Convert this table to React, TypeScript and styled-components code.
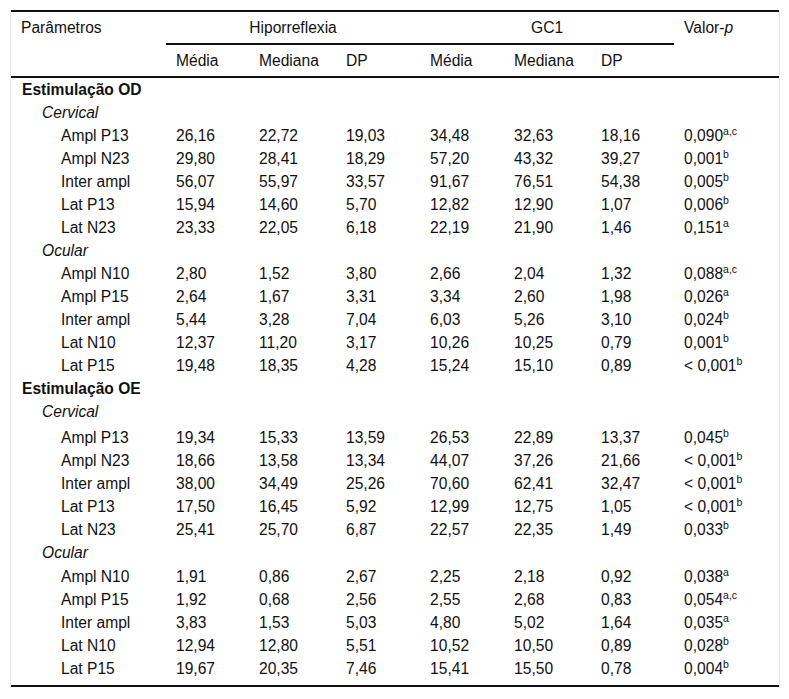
import React from "react";
import styled, { createGlobalStyle } from "styled-components";

const GlobalStyle = createGlobalStyle`
  body {
    margin: 0;
    background: #ffffff;
    font-family: "Liberation Sans", Arial, sans-serif;
    color: #111;
  }
`;

const Frame = styled.div`
  margin: 10px 10px 0 10px;
  width: 768px;
  border-left: 1px solid #e6e6e6;
  border-right: 1px solid #e6e6e6;
`;

const Table = styled.table`
  width: 768px;
  border-collapse: collapse;
  table-layout: fixed;
  font-size: 15.6px;
  line-height: 17px;
  border-top: 2px solid #111;
  border-bottom: 2px solid #111;
`;

const Th = styled.th<{ $center?: boolean; $rule?: boolean }>`
  font-weight: normal;
  text-align: ${(p) => (p.$center ? "center" : "left")};
  vertical-align: top;
  padding: 7px 0 7px ${(p) => (p.$center ? "0" : "10px")};
  border-bottom: ${(p) => (p.$rule ? "2px solid #111" : "none")};
`;

const HeadRow = styled.tr`
  height: 32px;
`;

const SubHeadRow = styled.tr`
  height: 32px;
  border-bottom: 2px solid #111;
`;

const Row = styled.tr<{ $extra?: number }>`
  height: ${(p) => 23 + (p.$extra ?? 0)}px;

  & > td {
    padding-bottom: ${(p) => 3 + (p.$extra ?? 0)}px;
  }
`;

const Cell = styled.td`
  padding: 3px 0 3px 10px;
  white-space: nowrap;
  vertical-align: top;
`;

const LabelCell = styled.td<{ $level: number }>`
  padding: 3px 0 3px ${(p) => (p.$level === 0 ? 11 : p.$level === 1 ? 31 : 50)}px;
  font-weight: ${(p) => (p.$level === 0 ? "bold" : "normal")};
  font-style: ${(p) => (p.$level === 1 ? "italic" : "normal")};
  white-space: nowrap;
  vertical-align: top;
`;

const Sup = styled.sup`
  font-size: 10.5px;
  line-height: 0;
`;

type DataRow = [string, string, string, string, string, string, string, string, string];

type Section = {
  title: string;
  groups: { name: string; extra?: number; rows: DataRow[] }[];
};

const sections: Section[] = [
  {
    title: "Estimulação OD",
    groups: [
      {
        name: "Cervical",
        rows: [
          ["Ampl P13", "26,16", "22,72", "19,03", "34,48", "32,63", "18,16", "0,090", "a,c"],
          ["Ampl N23", "29,80", "28,41", "18,29", "57,20", "43,32", "39,27", "0,001", "b"],
          ["Inter ampl", "56,07", "55,97", "33,57", "91,67", "76,51", "54,38", "0,005", "b"],
          ["Lat P13", "15,94", "14,60", "5,70", "12,82", "12,90", "1,07", "0,006", "b"],
          ["Lat N23", "23,33", "22,05", "6,18", "22,19", "21,90", "1,46", "0,151", "a"],
        ],
      },
      {
        name: "Ocular",
        rows: [
          ["Ampl N10", "2,80", "1,52", "3,80", "2,66", "2,04", "1,32", "0,088", "a,c"],
          ["Ampl P15", "2,64", "1,67", "3,31", "3,34", "2,60", "1,98", "0,026", "a"],
          ["Inter ampl", "5,44", "3,28", "7,04", "6,03", "5,26", "3,10", "0,024", "b"],
          ["Lat N10", "12,37", "11,20", "3,17", "10,26", "10,25", "0,79", "0,001", "b"],
          ["Lat P15", "19,48", "18,35", "4,28", "15,24", "15,10", "0,89", "< 0,001", "b"],
        ],
      },
    ],
  },
  {
    title: "Estimulação OE",
    groups: [
      {
        name: "Cervical",
        extra: 3,
        rows: [
          ["Ampl P13", "19,34", "15,33", "13,59", "26,53", "22,89", "13,37", "0,045", "b"],
          ["Ampl N23", "18,66", "13,58", "13,34", "44,07", "37,26", "21,66", "< 0,001", "b"],
          ["Inter ampl", "38,00", "34,49", "25,26", "70,60", "62,41", "32,47", "< 0,001", "b"],
          ["Lat P13", "17,50", "16,45", "5,92", "12,99", "12,75", "1,05", "< 0,001", "b"],
          ["Lat N23", "25,41", "25,70", "6,87", "22,57", "22,35", "1,49", "0,033", "b"],
        ],
      },
      {
        name: "Ocular",
        extra: 1,
        rows: [
          ["Ampl N10", "1,91", "0,86", "2,67", "2,25", "2,18", "0,92", "0,038", "a"],
          ["Ampl P15", "1,92", "0,68", "2,56", "2,55", "2,68", "0,83", "0,054", "a,c"],
          ["Inter ampl", "3,83", "1,53", "5,03", "4,80", "5,02", "1,64", "0,035", "a"],
          ["Lat N10", "12,94", "12,80", "5,51", "10,52", "10,50", "0,89", "0,028", "b"],
          ["Lat P15", "19,67", "20,35", "7,46", "15,41", "15,50", "0,78", "0,004", "b"],
        ],
      },
    ],
  },
];

const widths = [155, 83, 87, 84, 84, 87, 83, 105];

export default function App() {
  return (
    <>
      <GlobalStyle />
      <Frame>
        <Table>
          <colgroup>
            {widths.map((w, i) => (
              <col key={i} style={{ width: w }} />
            ))}
          </colgroup>
          <thead>
            <HeadRow>
              <Th rowSpan={2}>Parâmetros</Th>
              <Th colSpan={3} $center $rule>
                Hiporreflexia
              </Th>
              <Th colSpan={3} $center $rule>
                GC1
              </Th>
              <Th rowSpan={2}>
                Valor-<i>p</i>
              </Th>
            </HeadRow>
            <SubHeadRow>
              <Th>Média</Th>
              <Th>Mediana</Th>
              <Th>DP</Th>
              <Th>Média</Th>
              <Th>Mediana</Th>
              <Th>DP</Th>
            </SubHeadRow>
          </thead>
          <tbody>
            {sections.map((s, si) => (
              <React.Fragment key={s.title}>
                <Row>
                  <LabelCell $level={0} colSpan={8}>
                    {s.title}
                  </LabelCell>
                </Row>
                {s.groups.map((g, gi) => (
                  <React.Fragment key={g.name}>
                    <Row $extra={g.extra}>
                      <LabelCell $level={1} colSpan={8}>
                        {g.name}
                      </LabelCell>
                    </Row>
                    {g.rows.map((r, ri) => {
                      const last =
                        si === sections.length - 1 &&
                        gi === s.groups.length - 1 &&
                        ri === g.rows.length - 1;
                      return (
                        <Row key={r[0]} $extra={last ? 5 : 0}>
                          <LabelCell $level={2}>{r[0]}</LabelCell>
                          {r.slice(1, 7).map((v, i) => (
                            <Cell key={i}>{v}</Cell>
                          ))}
                          <Cell>
                            {r[7]}
                            <Sup>{r[8]}</Sup>
                          </Cell>
                        </Row>
                      );
                    })}
                  </React.Fragment>
                ))}
              </React.Fragment>
            ))}
          </tbody>
        </Table>
      </Frame>
    </>
  );
}
